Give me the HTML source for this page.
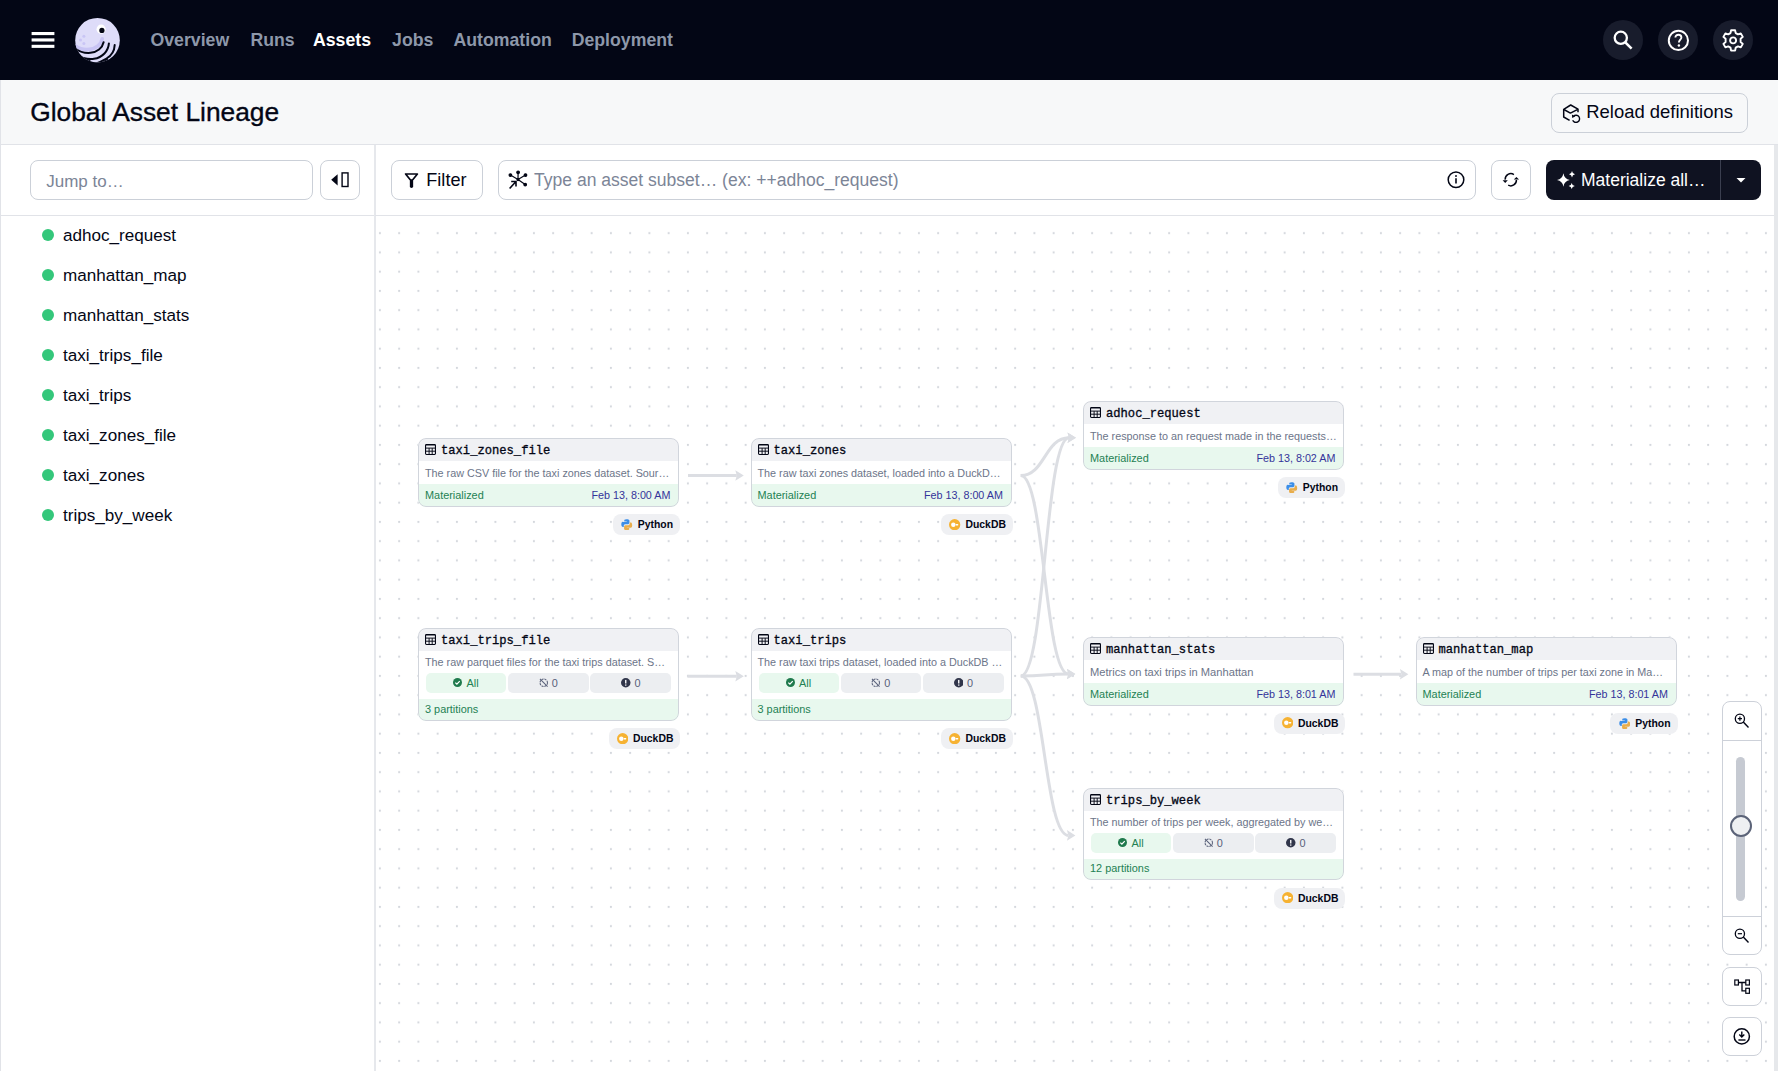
<!DOCTYPE html>
<html><head><meta charset="utf-8">
<style>
*{box-sizing:border-box;margin:0;padding:0}
html,body{width:1778px;height:1071px;overflow:hidden;background:#fff;font-family:"Liberation Sans",sans-serif;color:#030615}
.a{position:absolute}
.t{position:absolute;white-space:nowrap;line-height:1}
#nav{left:0;top:0;width:1778px;height:80px;background:#030615}
.nl{font-weight:bold;font-size:17.7px;color:#8e98aa;top:31.9px}
.ic{width:40px;height:40px;border-radius:20px;background:#181c2c;top:20px}
#ph{left:0;top:80px;width:1778px;height:65px;background:#f7f8f9;border-bottom:1px solid #e1e3e8;box-shadow:inset 1px 0 0 #e1e3e8}
.btn{position:absolute;border:1px solid #cbd0d8;border-radius:8px;background:#fff}
#side{left:0;top:145px;width:376px;height:926px;box-shadow:inset 1px 0 0 #e1e3e8,inset -2px 0 0 #e6e8ec;background:#fff}
.si{font-size:17.1px;left:63px;margin-top:1px}
.dot{width:12px;height:12px;border-radius:6px;background:#34c77b;left:41.5px}
#tb{left:375px;top:145px;width:1399px;height:71px;border-bottom:1px solid #e1e3e8;background:transparent}
.node{position:absolute;width:261px;border-radius:8px;overflow:hidden;background:#fff}
.nh{height:23px;background:#f0f1f4;position:relative}
.nt{position:absolute;left:23px;top:4.6px;font-family:"Liberation Mono",monospace;font-weight:normal;font-size:12.15px;line-height:1;color:#030615;white-space:nowrap;-webkit-text-stroke:0.3px #030615}
.ni{position:absolute;left:7.2px;top:6px;width:11px;height:11px}
.nd{height:22.7px;position:relative}
.ndt{position:absolute;left:7px;top:7px;font-size:10.8px;line-height:1;color:#6c7589;white-space:nowrap}
.ns{height:22.3px;background:#e8f8ee;position:relative}
.nst{position:absolute;left:7px;top:6.2px;font-size:10.9px;line-height:1;color:#238153;white-space:nowrap}
.nsd{position:absolute;right:8.6px;top:6.2px;font-size:10.78px;line-height:1;color:#34349a;white-space:nowrap}
.nb{position:absolute;left:0;top:0;right:0;bottom:0;border:1.5px solid #d1d5dc;border-radius:8px}
.tag{position:absolute;height:21px;border-radius:8px;background:#eff0f3;font-weight:bold;font-size:10.4px;line-height:22.6px;color:#030615;white-space:nowrap;padding-left:25px}
</style></head><body>

<!-- NAV -->
<div id="nav" class="a">
  <svg class="a" style="left:0;top:0" width="70" height="80"><rect x="31.6" y="32" width="22.8" height="3.1" fill="#fff"/><rect x="31.6" y="38.4" width="22.8" height="3.1" fill="#fff"/><rect x="31.6" y="44.8" width="22.8" height="3.1" fill="#fff"/></svg>
  <svg class="a" style="left:72px;top:14px" width="52" height="52" viewBox="0 0 52 52">
    <defs><clipPath id="hc"><circle cx="25.5" cy="26.2" r="22.3"/></clipPath></defs>
    <circle cx="25.5" cy="26.2" r="22.3" fill="#dedcf9"/>
    <g clip-path="url(#hc)" fill="none" stroke-linecap="round">
      <path d="M30.2 24.8 C29.4 30.5 24 34.6 17.5 35.4 C12 36 7 34.5 3.5 32" stroke="#c8c4f4" stroke-width="3.6"/>
      <path d="M31.6 28.2 C30.4 34 25 38.2 18.4 38.8 C12 39.3 7 37.5 3 34.5" stroke="#030615" stroke-width="2"/>
      <path d="M36.9 29.4 C36.4 37 30.5 43.5 22 44.8 C15 45.8 9 43.5 3 40" stroke="#030615" stroke-width="2"/>
      <path d="M42.7 31 C42.4 37.5 39 42 34.5 44.5 C31 46.5 26 49 20 51" stroke="#030615" stroke-width="2"/>
      <path d="M20 44.4 C13 44.8 8 43 3 40 L2 52 L19 52 Q16.5 47 20 44.4 Z" fill="#030615" stroke="none"/>
      <path d="M36.2 43.6 C33 46.5 29 48.5 24 50.5 L38 52 Q35 48 36.2 43.6 Z" fill="#030615" stroke="none"/>
    </g>
    <circle cx="11.9" cy="22.3" r="1.5" fill="#c9c5f5"/><circle cx="8.5" cy="26" r="1.5" fill="#c9c5f5"/><circle cx="11.9" cy="29.4" r="1.5" fill="#c9c5f5"/>
    <circle cx="29.1" cy="15.2" r="4.6" fill="#fff"/><circle cx="29.9" cy="16.4" r="2.6" fill="#030615"/>
  </svg>
  <div class="t nl" style="left:150.5px">Overview</div>
  <div class="t nl" style="left:250.4px">Runs</div>
  <div class="t nl" style="left:313px;color:#fff">Assets</div>
  <div class="t nl" style="left:392.1px">Jobs</div>
  <div class="t nl" style="left:453.5px">Automation</div>
  <div class="t nl" style="left:571.7px">Deployment</div>
  <div class="a ic" style="left:1603px"></div>
  <div class="a ic" style="left:1658px"></div>
  <div class="a ic" style="left:1713px"></div>
  <svg class="a" style="left:1603px;top:20px" width="40" height="40" viewBox="0 0 40 40">
    <circle cx="17.8" cy="17.8" r="6.1" fill="none" stroke="#fff" stroke-width="2.3"/>
    <path d="M22.3 22.3 L28.6 28.6" stroke="#fff" stroke-width="2.6"/>
  </svg>
  <svg class="a" style="left:1658px;top:20px" width="40" height="40" viewBox="0 0 40 40">
    <circle cx="20.4" cy="20.4" r="9.6" fill="none" stroke="#fff" stroke-width="2"/>
    <path d="M17.4 17.6 C17.4 15.8 18.7 14.8 20.4 14.8 C22.1 14.8 23.4 15.9 23.4 17.5 C23.4 19.6 20.9 19.7 20.9 22.6" fill="none" stroke="#fff" stroke-width="1.9"/>
    <circle cx="20.9" cy="25.5" r="1.2" fill="#fff"/>
  </svg>
  <svg class="a" style="left:1713px;top:20px" width="40" height="40" viewBox="0 0 40 40">
    <g transform="translate(20.1 20.4)">
      <path d="M-2 -10.2 H2 L2.6 -7.3 L4.9 -6 L7.7 -7 L9.7 -3.5 L7.5 -1.6 V1.6 L9.7 3.5 L7.7 7 L4.9 6 L2.6 7.3 L2 10.2 H-2 L-2.6 7.3 L-4.9 6 L-7.7 7 L-9.7 3.5 L-7.5 1.6 V-1.6 L-9.7 -3.5 L-7.7 -7 L-4.9 -6 L-2.6 -7.3 Z" fill="none" stroke="#fff" stroke-width="1.9" stroke-linejoin="round"/>
      <circle cx="0" cy="0" r="3" fill="none" stroke="#fff" stroke-width="1.9"/>
    </g>
  </svg>
</div>

<!-- PAGE HEADER -->
<div id="ph" class="a">
  <div class="t" style="left:30.2px;top:18.7px;font-size:26.35px;-webkit-text-stroke:0.35px #030615">Global Asset Lineage</div>
  <div class="btn" style="left:1551px;top:13px;width:197px;height:40px;background:transparent"></div>
  <div class="t" style="left:1586.3px;top:22.9px;font-size:18.45px">Reload definitions</div>
  <svg class="a" style="left:1555px;top:18px" width="40" height="30" viewBox="0 0 40 30">
    <path d="M14.6 22.4 L8.7 19 V11.3 L15.7 7 L23 11.2 V14.3" fill="none" stroke="#030615" stroke-width="1.5" stroke-linejoin="round"/>
    <path d="M8.9 11.5 L15.4 15.1 L22.8 11.3" fill="none" stroke="#030615" stroke-width="1.5" stroke-linejoin="round"/>
    <path d="M18.6 18.1 A3.6 3.6 0 1 1 17.7 22.3" fill="none" stroke="#030615" stroke-width="1.4"/>
    <path d="M16.9 16.6 L17.2 19.9 L20.2 18.6 Z" fill="#030615"/>
  </svg>
</div>

<!-- SIDEBAR -->
<div id="side" class="a">
  <div class="btn" style="left:30px;top:15px;width:283px;height:40px"></div>
  <div class="t" style="left:46.2px;top:27.5px;font-size:17px;color:#7c8597">Jump to…</div>
  <div class="btn" style="left:320px;top:15px;width:40px;height:40px"></div>
  <svg class="a" style="left:320px;top:15px" width="40" height="40" viewBox="0 0 40 40">
    <path d="M11.2 19.8 L17.6 14.2 V25.4 Z" fill="#030615"/>
    <rect x="22.1" y="12.9" width="5.9" height="13.6" fill="none" stroke="#030615" stroke-width="1.4"/>
  </svg>
  <div class="a" style="left:0;top:70px;width:374px;height:1px;background:#e1e3e8"></div>
</div>
<div class="a dot" style="top:229px"></div><div class="t si" style="top:226.2px">adhoc_request</div>
<div class="a dot" style="top:269px"></div><div class="t si" style="top:266.2px">manhattan_map</div>
<div class="a dot" style="top:309px"></div><div class="t si" style="top:306.2px">manhattan_stats</div>
<div class="a dot" style="top:349px"></div><div class="t si" style="top:346.2px">taxi_trips_file</div>
<div class="a dot" style="top:389px"></div><div class="t si" style="top:386.2px">taxi_trips</div>
<div class="a dot" style="top:429px"></div><div class="t si" style="top:426.2px">taxi_zones_file</div>
<div class="a dot" style="top:469px"></div><div class="t si" style="top:466.2px">taxi_zones</div>
<div class="a dot" style="top:509px"></div><div class="t si" style="top:506.2px">trips_by_week</div>

<!-- TOOLBAR -->
<div id="tb" class="a">
  <div class="btn" style="left:16px;top:15px;width:92px;height:40px"></div>
  <div class="t" style="left:51.3px;top:25.6px;font-size:18.1px">Filter</div>
  <div class="btn" style="left:123px;top:15px;width:978px;height:40px"></div>
  <div class="t" style="left:159px;top:27.1px;font-size:17.55px;color:#7c8597">Type an asset subset… (ex: ++adhoc_request)</div>
  <div class="btn" style="left:1116px;top:15px;width:40px;height:40px"></div>
  <div class="a" style="left:1171px;top:15px;width:215px;height:40px;background:#0f1221;border-radius:8px"></div>
  <div class="a" style="left:1345px;top:15px;width:1px;height:40px;background:#3b3f50"></div>
  <div class="t" style="left:1206px;top:27.1px;font-size:17.5px;color:#fff">Materialize all…</div>
  <svg class="a" style="left:23px;top:20px" width="30" height="30" viewBox="0 0 30 30">
    <path d="M7.6 9 H19.4 L13.5 16.3 Z" fill="none" stroke="#030615" stroke-width="1.7" stroke-linejoin="round"/>
    <path d="M13.5 16 V21.3" stroke="#030615" stroke-width="3.3" stroke-linecap="round"/>
  </svg>
  <svg class="a" style="left:127px;top:20px" width="30" height="30" viewBox="0 0 30 30">
    <g stroke="#030615" stroke-width="1.2" fill="#030615">
      <path d="M16 14.6 L16.1 7.3 M16 14.6 L8.4 10.1 M16 14.6 L23.5 10.1 M16 14.6 L23.2 19.6" fill="none"/>
      <circle cx="16.1" cy="7.3" r="1.3"/><circle cx="8.4" cy="10.1" r="1.3"/><circle cx="23.5" cy="10.1" r="1.3"/><circle cx="23.2" cy="19.6" r="1.3"/><circle cx="16" cy="14.6" r="1"/>
      <path d="M7.6 23.5 L14 16.5 M9.2 16.5 H14 V21.6" fill="none" stroke-width="1.6"/>
    </g>
  </svg>
  <svg class="a" style="left:1066px;top:20px" width="30" height="30" viewBox="0 0 30 30">
    <circle cx="15" cy="14.8" r="7.8" fill="none" stroke="#030615" stroke-width="1.5"/>
    <path d="M15 13.3 V18.6" stroke="#030615" stroke-width="1.6"/>
    <circle cx="15" cy="11" r="0.95" fill="#030615"/>
  </svg>
  <svg class="a" style="left:1116px;top:15px" width="40" height="40" viewBox="0 0 40 40">
    <path d="M22.9 14.6 A5.6 5.6 0 0 0 14.2 19.6" fill="none" stroke="#030615" stroke-width="1.5"/>
    <path d="M17.2 25.2 A5.6 5.6 0 0 0 25.4 20" fill="none" stroke="#030615" stroke-width="1.5"/>
    <path d="M11.6 20.2 H16.8 L14.2 22.9 Z" fill="#030615"/>
    <path d="M22.8 19.6 H28 L25.4 16.9 Z" fill="#030615"/>
  </svg>
  <svg class="a" style="left:1171px;top:15px" width="40" height="40" viewBox="0 0 40 40">
    <path d="M17.4 13.3 Q18.30 19.06 23.799999999999997 20 Q18.30 20.94 17.4 26.7 Q16.50 20.94 10.999999999999998 20 Q16.50 19.06 17.4 13.3 Z" fill="#fff"/>
    <path d="M26 11.0 Q26.42 13.84 29 14.3 Q26.42 14.76 26 17.6 Q25.58 14.76 23 14.3 Q25.58 13.84 26 11.0 Z" fill="#fff"/>
    <path d="M25.7 22.9 Q26.13 25.57 28.8 26 Q26.13 26.43 25.7 29.1 Q25.27 26.43 22.599999999999998 26 Q25.27 25.57 25.7 22.9 Z" fill="#fff"/>
  </svg>
  <svg class="a" style="left:1346px;top:15px" width="40" height="40" viewBox="0 0 40 40">
    <path d="M15.5 18 H24.5 L20 22.5 Z" fill="#fff"/>
  </svg>
</div>

<!-- CANVAS -->
<svg class="a" style="left:375px;top:216px" width="1399" height="855">
  <defs>
    <pattern id="dots" x="-4.725" y="7.575" width="19.25" height="19.25" patternUnits="userSpaceOnUse">
      <circle cx="9.625" cy="9.625" r="1.1" fill="#d3d6dc"/>
    </pattern>
  </defs>
  <rect x="0" y="0" width="1399" height="855" fill="url(#dots)"/>
</svg>
<svg class="a" style="left:0;top:0" width="1778" height="1071">
<path d="M688,475.5 C712.4,475.5 712.4,475.5 736.8,475.5" fill="none" stroke="#dcdee3" stroke-width="3"/>
<path d="M743.8,475.5 L735.3,470.2 L736.8,475.5 L735.3,480.8 Z" fill="#dcdee3"/>
<path d="M687.4,676.2 C712.0999999999999,676.2 712.0999999999999,676.2 736.8,676.2" fill="none" stroke="#dcdee3" stroke-width="3"/>
<path d="M743.8,676.2 L735.3,670.9000000000001 L736.8,676.2 L735.3,681.5 Z" fill="#dcdee3"/>
<path d="M1020.7,475.6 C1044.85,475.6 1044.85,437.7 1069,437.7" fill="none" stroke="#dcdee3" stroke-width="3"/>
<path d="M1076,437.7 L1067.5,432.4 L1069,437.7 L1067.5,443.0 Z" fill="#dcdee3"/>
<path d="M1020.7,475.6 C1044.5500000000002,475.6 1044.5500000000002,674 1068.4,674" fill="none" stroke="#dcdee3" stroke-width="3"/>
<path d="M1075.4,674 L1066.9,668.7 L1068.4,674 L1066.9,679.3 Z" fill="#dcdee3"/>
<path d="M1020.8,676 C1044.9,676 1044.9,437.7 1069,437.7" fill="none" stroke="#dcdee3" stroke-width="3"/>
<path d="M1076,437.7 L1067.5,432.4 L1069,437.7 L1067.5,443.0 Z" fill="#dcdee3"/>
<path d="M1020.8,676 C1044.6,676 1044.6,674 1068.4,674" fill="none" stroke="#dcdee3" stroke-width="3"/>
<path d="M1075.4,674 L1066.9,668.7 L1068.4,674 L1066.9,679.3 Z" fill="#dcdee3"/>
<path d="M1020.8,676 C1044.6,676 1044.6,835.4 1068.4,835.4" fill="none" stroke="#dcdee3" stroke-width="3"/>
<path d="M1075.4,835.4 L1066.9,830.1 L1068.4,835.4 L1066.9,840.6999999999999 Z" fill="#dcdee3"/>
<path d="M1353.5,674.2 C1377.45,674.2 1377.45,674.2 1401.4,674.2" fill="none" stroke="#dcdee3" stroke-width="3"/>
<path d="M1408.4,674.2 L1399.9,668.9000000000001 L1401.4,674.2 L1399.9,679.5 Z" fill="#dcdee3"/>
</svg>
<div class="node" style="left:418px;top:438.2px;height:68.5px"><div class="a" style="left:0;top:0;width:262.3px;height:23px;background:#f0f1f4"></div><svg class="ni a" viewBox="0 0 11 11"><rect x="0.55" y="0.6" width="9.9" height="9.85" rx="0.9" fill="none" stroke="#030615" stroke-width="1.1"/><path d="M0.9 0.9H10.1" stroke="#030615" stroke-width="0.8"/><path d="M0.55 4.1H10.45M0.55 7.2H10.45M4.1 4.1V10.45M7.2 4.1V10.45" stroke="#030615" stroke-width="0.95"/></svg><div class="nt" style="top:6.69px">taxi_zones_file</div><div class="ndt" style="top:29.86px">The raw CSV file for the taxi zones dataset. Sour…</div><div class="a" style="left:0;top:45.8px;width:262.3px;height:30px;background:#e8f8ee"></div><div class="nst" style="top:51.77px">Materialized</div><div class="nsd" style="top:52.00px">Feb 13, 8:00 AM</div><div class="nb"></div></div><div class="tag" style="left:612.8px;top:514.0px;width:67.5px;padding-left:25px"><svg class="a" style="left:8.4px;top:4.8px" width="11.5" height="11.5" viewBox="0 0 12 12"><path d="M5.9 0.3c-2.6 0-2.5 1.1-2.5 1.1v1.2h2.6v0.4H2.3S0.3 2.8 0.3 5.6c0 2.8 1.6 2.7 1.6 2.7h1V7s-0.1-1.6 1.6-1.6h2.7s1.6 0 1.6-1.5V1.8S9 0.3 5.9 0.3z" fill="#3b8ee8"/><path d="M6.1 11.7c2.6 0 2.5-1.1 2.5-1.1V9.4H6v-0.4h3.7s2 0.2 2-2.6c0-2.8-1.6-2.7-1.6-2.7h-1V5s0.1 1.6-1.6 1.6H4.8s-1.6 0-1.6 1.5v2.1S3 11.7 6.1 11.7z" fill="#e8ad4c"/></svg>Python</div>
<div class="node" style="left:750.5px;top:438.2px;height:68.5px"><div class="a" style="left:0;top:0;width:262.3px;height:23px;background:#f0f1f4"></div><svg class="ni a" viewBox="0 0 11 11"><rect x="0.55" y="0.6" width="9.9" height="9.85" rx="0.9" fill="none" stroke="#030615" stroke-width="1.1"/><path d="M0.9 0.9H10.1" stroke="#030615" stroke-width="0.8"/><path d="M0.55 4.1H10.45M0.55 7.2H10.45M4.1 4.1V10.45M7.2 4.1V10.45" stroke="#030615" stroke-width="0.95"/></svg><div class="nt" style="top:6.69px">taxi_zones</div><div class="ndt" style="top:29.86px">The raw taxi zones dataset, loaded into a DuckD…</div><div class="a" style="left:0;top:45.8px;width:262.3px;height:30px;background:#e8f8ee"></div><div class="nst" style="top:51.77px">Materialized</div><div class="nsd" style="top:52.00px">Feb 13, 8:00 AM</div><div class="nb"></div></div><div class="tag" style="left:941.2px;top:514.0px;width:71.6px;padding-left:24.3px"><svg class="a" style="left:8.1px;top:4.6px" width="11.3" height="11.3" viewBox="0 0 12 12"><circle cx="6" cy="6" r="6" fill="#f6b232"/><circle cx="4.6" cy="6" r="2.4" fill="#fff"/><rect x="7.2" y="5.2" width="2.6" height="1.6" rx="0.4" fill="#fff"/></svg>DuckDB</div>
<div class="node" style="left:1083px;top:401.4px;height:68.5px"><div class="a" style="left:0;top:0;width:262.3px;height:23px;background:#f0f1f4"></div><svg class="ni a" viewBox="0 0 11 11"><rect x="0.55" y="0.6" width="9.9" height="9.85" rx="0.9" fill="none" stroke="#030615" stroke-width="1.1"/><path d="M0.9 0.9H10.1" stroke="#030615" stroke-width="0.8"/><path d="M0.55 4.1H10.45M0.55 7.2H10.45M4.1 4.1V10.45M7.2 4.1V10.45" stroke="#030615" stroke-width="0.95"/></svg><div class="nt" style="top:6.69px">adhoc_request</div><div class="ndt" style="top:29.86px">The response to an request made in the requests…</div><div class="a" style="left:0;top:45.8px;width:262.3px;height:30px;background:#e8f8ee"></div><div class="nst" style="top:51.77px">Materialized</div><div class="nsd" style="top:52.00px">Feb 13, 8:02 AM</div><div class="nb"></div></div><div class="tag" style="left:1277.8px;top:477.2px;width:67.5px;padding-left:25px"><svg class="a" style="left:8.4px;top:4.8px" width="11.5" height="11.5" viewBox="0 0 12 12"><path d="M5.9 0.3c-2.6 0-2.5 1.1-2.5 1.1v1.2h2.6v0.4H2.3S0.3 2.8 0.3 5.6c0 2.8 1.6 2.7 1.6 2.7h1V7s-0.1-1.6 1.6-1.6h2.7s1.6 0 1.6-1.5V1.8S9 0.3 5.9 0.3z" fill="#3b8ee8"/><path d="M6.1 11.7c2.6 0 2.5-1.1 2.5-1.1V9.4H6v-0.4h3.7s2 0.2 2-2.6c0-2.8-1.6-2.7-1.6-2.7h-1V5s0.1 1.6-1.6 1.6H4.8s-1.6 0-1.6 1.5v2.1S3 11.7 6.1 11.7z" fill="#e8ad4c"/></svg>Python</div>
<div class="node" style="left:418px;top:628.1px;height:92.8px"><div class="a" style="left:0;top:0;width:262.3px;height:23px;background:#f0f1f4"></div><svg class="ni a" viewBox="0 0 11 11"><rect x="0.55" y="0.6" width="9.9" height="9.85" rx="0.9" fill="none" stroke="#030615" stroke-width="1.1"/><path d="M0.9 0.9H10.1" stroke="#030615" stroke-width="0.8"/><path d="M0.55 4.1H10.45M0.55 7.2H10.45M4.1 4.1V10.45M7.2 4.1V10.45" stroke="#030615" stroke-width="0.95"/></svg><div class="nt" style="top:6.69px">taxi_trips_file</div><div class="ndt" style="top:29.16px">The raw parquet files for the taxi trips dataset. S…</div><div class="a" style="left:8px;top:45px;width:80.2px;height:19.8px;border-radius:5px;background:#e8f8ee"></div><svg class="a" style="left:35.3px;top:50.2px" width="9" height="9" viewBox="0 0 10 10"><circle cx="5" cy="5" r="5" fill="#1f7a4d"/><path d="M2.6 5.1l1.7 1.7 3.2-3.3" fill="none" stroke="#fff" stroke-width="1.4"/></svg><div class="t" style="left:48.6px;top:49.67px;font-size:10.9px;color:#238153">All</div><div class="a" style="left:90px;top:45px;width:80.6px;height:19.8px;border-radius:5px;background:#eceef1"></div><svg class="a" style="left:120.6px;top:50.2px" width="9.5" height="9.5" viewBox="0 0 10 10"><circle cx="5" cy="5" r="3.9" fill="none" stroke="#59617a" stroke-width="1.1" stroke-dasharray="2.2 0.9"/><path d="M1 1L9 9" stroke="#59617a" stroke-width="1.1"/></svg><div class="t" style="left:133.7px;top:49.67px;font-size:10.9px;color:#59617a">0</div><div class="a" style="left:172.4px;top:45px;width:80.8px;height:19.8px;border-radius:5px;background:#eceef1"></div><svg class="a" style="left:203px;top:50.2px" width="9.5" height="9.5" viewBox="0 0 10 10"><circle cx="5" cy="5" r="5" fill="#30354a"/><rect x="4.3" y="2" width="1.4" height="3.8" fill="#fff"/><rect x="4.3" y="6.8" width="1.4" height="1.3" fill="#fff"/></svg><div class="t" style="left:216.5px;top:49.67px;font-size:10.9px;color:#59617a">0</div><div class="a" style="left:0;top:70.5px;width:262.3px;height:30px;background:#e8f8ee"></div><div class="nst" style="top:76.37px">3 partitions</div><div class="nb"></div></div><div class="tag" style="left:608.7px;top:728.2px;width:71.6px;padding-left:24.3px"><svg class="a" style="left:8.1px;top:4.6px" width="11.3" height="11.3" viewBox="0 0 12 12"><circle cx="6" cy="6" r="6" fill="#f6b232"/><circle cx="4.6" cy="6" r="2.4" fill="#fff"/><rect x="7.2" y="5.2" width="2.6" height="1.6" rx="0.4" fill="#fff"/></svg>DuckDB</div>
<div class="node" style="left:750.5px;top:628.1px;height:92.8px"><div class="a" style="left:0;top:0;width:262.3px;height:23px;background:#f0f1f4"></div><svg class="ni a" viewBox="0 0 11 11"><rect x="0.55" y="0.6" width="9.9" height="9.85" rx="0.9" fill="none" stroke="#030615" stroke-width="1.1"/><path d="M0.9 0.9H10.1" stroke="#030615" stroke-width="0.8"/><path d="M0.55 4.1H10.45M0.55 7.2H10.45M4.1 4.1V10.45M7.2 4.1V10.45" stroke="#030615" stroke-width="0.95"/></svg><div class="nt" style="top:6.69px">taxi_trips</div><div class="ndt" style="top:29.16px">The raw taxi trips dataset, loaded into a DuckDB …</div><div class="a" style="left:8px;top:45px;width:80.2px;height:19.8px;border-radius:5px;background:#e8f8ee"></div><svg class="a" style="left:35.3px;top:50.2px" width="9" height="9" viewBox="0 0 10 10"><circle cx="5" cy="5" r="5" fill="#1f7a4d"/><path d="M2.6 5.1l1.7 1.7 3.2-3.3" fill="none" stroke="#fff" stroke-width="1.4"/></svg><div class="t" style="left:48.6px;top:49.67px;font-size:10.9px;color:#238153">All</div><div class="a" style="left:90px;top:45px;width:80.6px;height:19.8px;border-radius:5px;background:#eceef1"></div><svg class="a" style="left:120.6px;top:50.2px" width="9.5" height="9.5" viewBox="0 0 10 10"><circle cx="5" cy="5" r="3.9" fill="none" stroke="#59617a" stroke-width="1.1" stroke-dasharray="2.2 0.9"/><path d="M1 1L9 9" stroke="#59617a" stroke-width="1.1"/></svg><div class="t" style="left:133.7px;top:49.67px;font-size:10.9px;color:#59617a">0</div><div class="a" style="left:172.4px;top:45px;width:80.8px;height:19.8px;border-radius:5px;background:#eceef1"></div><svg class="a" style="left:203px;top:50.2px" width="9.5" height="9.5" viewBox="0 0 10 10"><circle cx="5" cy="5" r="5" fill="#30354a"/><rect x="4.3" y="2" width="1.4" height="3.8" fill="#fff"/><rect x="4.3" y="6.8" width="1.4" height="1.3" fill="#fff"/></svg><div class="t" style="left:216.5px;top:49.67px;font-size:10.9px;color:#59617a">0</div><div class="a" style="left:0;top:70.5px;width:262.3px;height:30px;background:#e8f8ee"></div><div class="nst" style="top:76.37px">3 partitions</div><div class="nb"></div></div><div class="tag" style="left:941.2px;top:728.2px;width:71.6px;padding-left:24.3px"><svg class="a" style="left:8.1px;top:4.6px" width="11.3" height="11.3" viewBox="0 0 12 12"><circle cx="6" cy="6" r="6" fill="#f6b232"/><circle cx="4.6" cy="6" r="2.4" fill="#fff"/><rect x="7.2" y="5.2" width="2.6" height="1.6" rx="0.4" fill="#fff"/></svg>DuckDB</div>
<div class="node" style="left:1083px;top:637px;height:68.5px"><div class="a" style="left:0;top:0;width:262.3px;height:23px;background:#f0f1f4"></div><svg class="ni a" viewBox="0 0 11 11"><rect x="0.55" y="0.6" width="9.9" height="9.85" rx="0.9" fill="none" stroke="#030615" stroke-width="1.1"/><path d="M0.9 0.9H10.1" stroke="#030615" stroke-width="0.8"/><path d="M0.55 4.1H10.45M0.55 7.2H10.45M4.1 4.1V10.45M7.2 4.1V10.45" stroke="#030615" stroke-width="0.95"/></svg><div class="nt" style="top:6.69px">manhattan_stats</div><div class="ndt" style="top:29.86px;font-size:11.15px">Metrics on taxi trips in Manhattan</div><div class="a" style="left:0;top:45.8px;width:262.3px;height:30px;background:#e8f8ee"></div><div class="nst" style="top:51.77px">Materialized</div><div class="nsd" style="top:52.00px">Feb 13, 8:01 AM</div><div class="nb"></div></div><div class="tag" style="left:1273.7px;top:712.8px;width:71.6px;padding-left:24.3px"><svg class="a" style="left:8.1px;top:4.6px" width="11.3" height="11.3" viewBox="0 0 12 12"><circle cx="6" cy="6" r="6" fill="#f6b232"/><circle cx="4.6" cy="6" r="2.4" fill="#fff"/><rect x="7.2" y="5.2" width="2.6" height="1.6" rx="0.4" fill="#fff"/></svg>DuckDB</div>
<div class="node" style="left:1415.5px;top:637px;height:68.5px"><div class="a" style="left:0;top:0;width:262.3px;height:23px;background:#f0f1f4"></div><svg class="ni a" viewBox="0 0 11 11"><rect x="0.55" y="0.6" width="9.9" height="9.85" rx="0.9" fill="none" stroke="#030615" stroke-width="1.1"/><path d="M0.9 0.9H10.1" stroke="#030615" stroke-width="0.8"/><path d="M0.55 4.1H10.45M0.55 7.2H10.45M4.1 4.1V10.45M7.2 4.1V10.45" stroke="#030615" stroke-width="0.95"/></svg><div class="nt" style="top:6.69px">manhattan_map</div><div class="ndt" style="top:29.86px">A map of the number of trips per taxi zone in Ma…</div><div class="a" style="left:0;top:45.8px;width:262.3px;height:30px;background:#e8f8ee"></div><div class="nst" style="top:51.77px">Materialized</div><div class="nsd" style="top:52.00px">Feb 13, 8:01 AM</div><div class="nb"></div></div><div class="tag" style="left:1610.3px;top:712.8px;width:67.5px;padding-left:25px"><svg class="a" style="left:8.4px;top:4.8px" width="11.5" height="11.5" viewBox="0 0 12 12"><path d="M5.9 0.3c-2.6 0-2.5 1.1-2.5 1.1v1.2h2.6v0.4H2.3S0.3 2.8 0.3 5.6c0 2.8 1.6 2.7 1.6 2.7h1V7s-0.1-1.6 1.6-1.6h2.7s1.6 0 1.6-1.5V1.8S9 0.3 5.9 0.3z" fill="#3b8ee8"/><path d="M6.1 11.7c2.6 0 2.5-1.1 2.5-1.1V9.4H6v-0.4h3.7s2 0.2 2-2.6c0-2.8-1.6-2.7-1.6-2.7h-1V5s0.1 1.6-1.6 1.6H4.8s-1.6 0-1.6 1.5v2.1S3 11.7 6.1 11.7z" fill="#e8ad4c"/></svg>Python</div>
<div class="node" style="left:1083px;top:788.3px;height:92px"><div class="a" style="left:0;top:0;width:262.3px;height:23px;background:#f0f1f4"></div><svg class="ni a" viewBox="0 0 11 11"><rect x="0.55" y="0.6" width="9.9" height="9.85" rx="0.9" fill="none" stroke="#030615" stroke-width="1.1"/><path d="M0.9 0.9H10.1" stroke="#030615" stroke-width="0.8"/><path d="M0.55 4.1H10.45M0.55 7.2H10.45M4.1 4.1V10.45M7.2 4.1V10.45" stroke="#030615" stroke-width="0.95"/></svg><div class="nt" style="top:6.69px">trips_by_week</div><div class="ndt" style="top:29.16px">The number of trips per week, aggregated by we…</div><div class="a" style="left:8px;top:45px;width:80.2px;height:19.8px;border-radius:5px;background:#e8f8ee"></div><svg class="a" style="left:35.3px;top:50.2px" width="9" height="9" viewBox="0 0 10 10"><circle cx="5" cy="5" r="5" fill="#1f7a4d"/><path d="M2.6 5.1l1.7 1.7 3.2-3.3" fill="none" stroke="#fff" stroke-width="1.4"/></svg><div class="t" style="left:48.6px;top:49.67px;font-size:10.9px;color:#238153">All</div><div class="a" style="left:90px;top:45px;width:80.6px;height:19.8px;border-radius:5px;background:#eceef1"></div><svg class="a" style="left:120.6px;top:50.2px" width="9.5" height="9.5" viewBox="0 0 10 10"><circle cx="5" cy="5" r="3.9" fill="none" stroke="#59617a" stroke-width="1.1" stroke-dasharray="2.2 0.9"/><path d="M1 1L9 9" stroke="#59617a" stroke-width="1.1"/></svg><div class="t" style="left:133.7px;top:49.67px;font-size:10.9px;color:#59617a">0</div><div class="a" style="left:172.4px;top:45px;width:80.8px;height:19.8px;border-radius:5px;background:#eceef1"></div><svg class="a" style="left:203px;top:50.2px" width="9.5" height="9.5" viewBox="0 0 10 10"><circle cx="5" cy="5" r="5" fill="#30354a"/><rect x="4.3" y="2" width="1.4" height="3.8" fill="#fff"/><rect x="4.3" y="6.8" width="1.4" height="1.3" fill="#fff"/></svg><div class="t" style="left:216.5px;top:49.67px;font-size:10.9px;color:#59617a">0</div><div class="a" style="left:0;top:70.5px;width:262.3px;height:30px;background:#e8f8ee"></div><div class="nst" style="top:74.37px">12 partitions</div><div class="nb"></div></div><div class="tag" style="left:1273.7px;top:887.6px;width:71.6px;padding-left:24.3px"><svg class="a" style="left:8.1px;top:4.6px" width="11.3" height="11.3" viewBox="0 0 12 12"><circle cx="6" cy="6" r="6" fill="#f6b232"/><circle cx="4.6" cy="6" r="2.4" fill="#fff"/><rect x="7.2" y="5.2" width="2.6" height="1.6" rx="0.4" fill="#fff"/></svg>DuckDB</div>
<div class="a" style="left:1722px;top:701px;width:40px;height:254px;border:1px solid #cdd1d9;border-radius:8px;background:#fff"></div>
<div class="a" style="left:1722px;top:740px;width:40px;height:1px;background:#cdd1d9"></div>
<div class="a" style="left:1722px;top:916px;width:40px;height:1px;background:#cdd1d9"></div>
<div class="a" style="left:1736.3px;top:756.6px;width:9.2px;height:144px;border-radius:4.6px;background:#c6cad2"></div>
<div class="a" style="left:1729.5px;top:815.2px;width:22px;height:22px;border-radius:11px;background:#eef0f2;border:2px solid #5b6378"></div>
<svg class="a" style="left:1722px;top:701px" width="40" height="40" viewBox="0 0 40 40">
  <circle cx="17.9" cy="17.7" r="4.6" fill="none" stroke="#030615" stroke-width="1.3"/>
  <path d="M21.3 21.1 L26.5 26.5" stroke="#030615" stroke-width="1.4"/>
  <path d="M17.9 15.6 V19.8 M15.8 17.7 H20" stroke="#030615" stroke-width="1.2"/>
</svg>
<svg class="a" style="left:1722px;top:916px" width="40" height="40" viewBox="0 0 40 40">
  <circle cx="17.9" cy="17.7" r="4.6" fill="none" stroke="#030615" stroke-width="1.3"/>
  <path d="M21.3 21.1 L26.5 26.5" stroke="#030615" stroke-width="1.4"/>
  <path d="M15.8 17.7 H20" stroke="#030615" stroke-width="1.2"/>
</svg>
<div class="a" style="left:1722px;top:966.5px;width:40px;height:39px;border:1px solid #cdd1d9;border-radius:8px;background:#fff"></div>
<svg class="a" style="left:1722px;top:966.5px" width="40" height="39" viewBox="0 0 40 39">
  <g fill="none" stroke="#030615" stroke-width="1.2">
    <rect x="12.8" y="13" width="3.6" height="5"/><rect x="23.8" y="13" width="3.6" height="5"/><rect x="23.8" y="21.3" width="3.6" height="5"/>
    <path d="M16.4 15.5 H23.8 M20 15.5 V23.8 H23.8" stroke-width="1.3"/>
  </g>
</svg>
<div class="a" style="left:1722px;top:1016.5px;width:40px;height:39.5px;border:1px solid #cdd1d9;border-radius:8px;background:#fff"></div>
<svg class="a" style="left:1722px;top:1016.5px" width="40" height="40" viewBox="0 0 40 40">
  <circle cx="19.8" cy="19.4" r="7.6" fill="none" stroke="#030615" stroke-width="1.5"/>
  <path d="M19.8 14.6 V19.6 M17.3 17.4 L19.8 19.9 L22.3 17.4" fill="none" stroke="#030615" stroke-width="1.4"/>
  <path d="M16.4 23 H23.5" stroke="#030615" stroke-width="1.4"/>
</svg>
<div class="a" style="left:1774px;top:145px;width:4px;height:926px;background:#e6e8eb"></div>

</body></html>
